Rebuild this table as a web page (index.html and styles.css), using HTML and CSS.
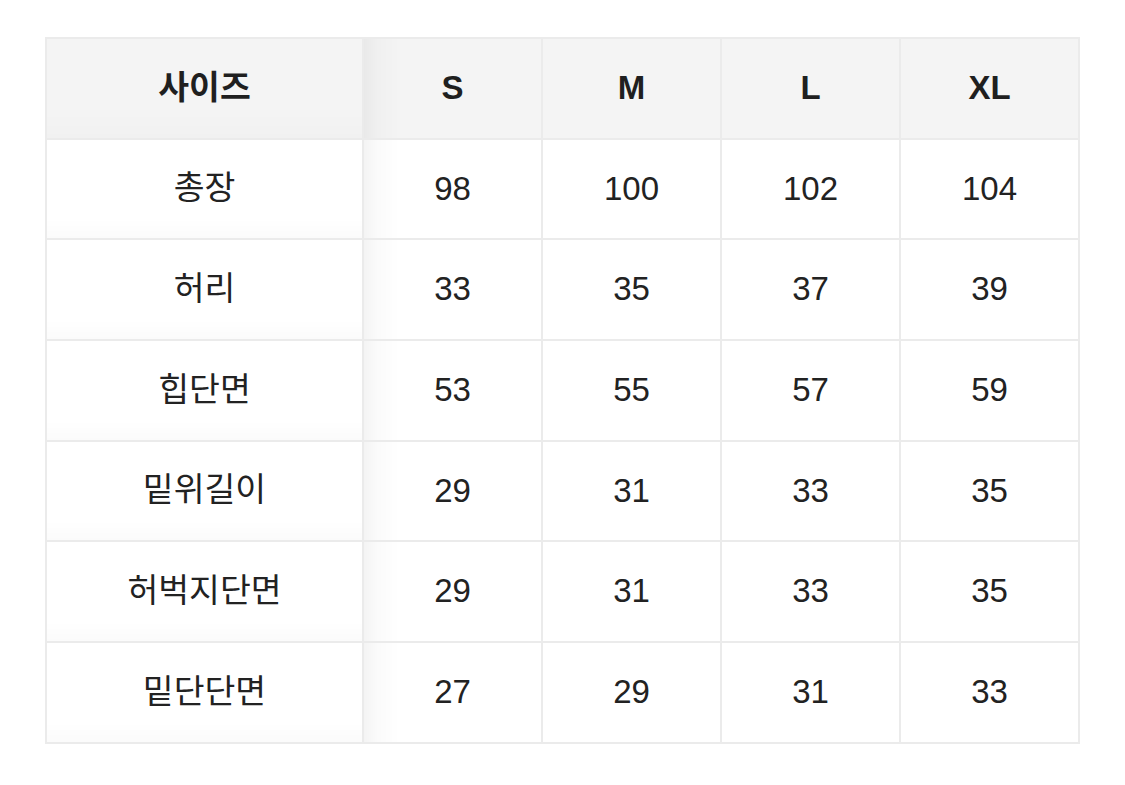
FILE: index.html
```html
<!DOCTYPE html>
<html lang="ko">
<head>
<meta charset="utf-8">
<title>사이즈표</title>
<link rel="stylesheet" href="styles.css">
</head>
<body>
<table class="size-table">
  <colgroup>
    <col class="col-label">
    <col class="col-size"><col class="col-size"><col class="col-size"><col class="col-size">
  </colgroup>
  <thead>
    <tr><th class="label">사이즈</th><th class="first">S</th><th>M</th><th>L</th><th>XL</th></tr>
  </thead>
  <tbody>
    <tr><td class="label">총장</td><td class="first">98</td><td>100</td><td>102</td><td>104</td></tr>
    <tr><td class="label">허리</td><td class="first">33</td><td>35</td><td>37</td><td>39</td></tr>
    <tr><td class="label">힙단면</td><td class="first">53</td><td>55</td><td>57</td><td>59</td></tr>
    <tr><td class="label">밑위길이</td><td class="first">29</td><td>31</td><td>33</td><td>35</td></tr>
    <tr><td class="label">허벅지단면</td><td class="first">29</td><td>31</td><td>33</td><td>35</td></tr>
    <tr><td class="label">밑단단면</td><td class="first">27</td><td>29</td><td>31</td><td>33</td></tr>
  </tbody>
</table>
</body>
</html>
```
FILE: styles.css
```css
html, body {
  margin: 0;
  padding: 0;
  background: #ffffff;
}
body {
  padding: 37px 0 0 45px;
  font-family: "Liberation Sans", "Noto Sans CJK KR", sans-serif;
  color: #222222;
}
.size-table {
  border-collapse: collapse;
  width: 1034px;
  table-layout: fixed;
}
.col-label { width: 317px; }
.col-size { width: 179px; }
.size-table th,
.size-table td {
  border: 2px solid #ebebeb;
  height: 96.7px;
  padding: 0 0 2px 0;
  text-align: center;
  vertical-align: middle;
  font-size: 33px;
  line-height: 1;
}
.size-table th {
  background: #f4f4f4;
  font-weight: bold;
  color: #1f1f1f;
}
.size-table td {
  font-weight: normal;
  background: #ffffff;
}
.size-table .label {
  font-size: 33.5px;
}
.size-table td.label {
  background: linear-gradient(to bottom, rgba(0,0,0,0) 80%, rgba(0,0,0,0.014));
}
.size-table th.label {
  background: linear-gradient(to bottom, rgba(0,0,0,0) 75%, rgba(0,0,0,0.012)), #f4f4f4;
}
.size-table td.first {
  background: linear-gradient(to right, rgba(0,0,0,0.045), rgba(0,0,0,0.015) 14px, rgba(0,0,0,0) 36px), #ffffff;
}
.size-table th.first {
  background: linear-gradient(to right, rgba(0,0,0,0.045), rgba(0,0,0,0.015) 14px, rgba(0,0,0,0) 36px), #f4f4f4;
}
```
